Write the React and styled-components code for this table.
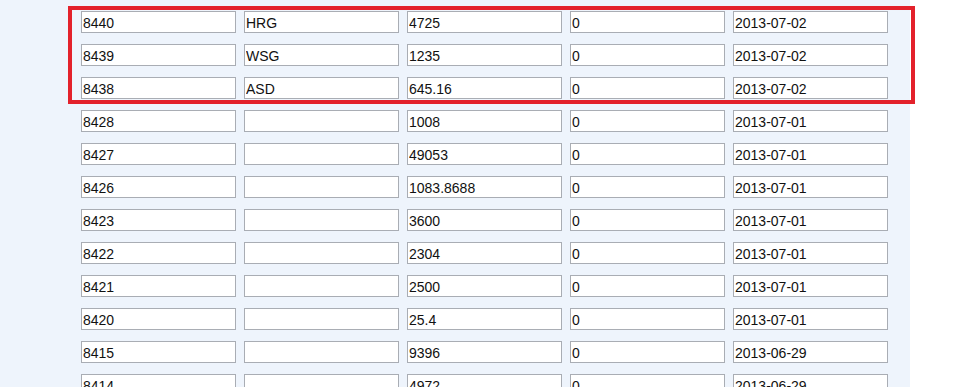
import React from "react";
import styled, { createGlobalStyle } from "styled-components";

const Global = createGlobalStyle`
  html, body { margin: 0; padding: 0; background: #ffffff; }
  body { font-family: "Liberation Sans", Arial, sans-serif; overflow: hidden; }
`;

const Page = styled.div`
  width: 910px;
  min-height: 387px;
  background: #eef4fc;
  position: relative;
  padding: 11px 0 0 81px;
  box-sizing: border-box;
`;

const List = styled.div`
  display: flex;
  flex-direction: column;
  gap: 11px;
`;

const Row = styled.div`
  display: flex;
  gap: 8px;
`;

const Field = styled.input`
  width: 155px;
  height: 22px;
  box-sizing: border-box;
  border: 1px solid #a9adb4;
  background: #ffffff;
  margin: 0;
  padding: 1px 2px 0 1px;
  font-family: "Liberation Sans", Arial, sans-serif;
  font-size: 14px;
  color: #111111;
  outline: none;
`;

const Highlight = styled.div`
  position: absolute;
  left: 68px;
  top: 6px;
  width: 847px;
  height: 98px;
  box-sizing: border-box;
  border: 4px solid #e3212b;
  pointer-events: none;
`;

const rows = [
  ["8440", "HRG", "4725", "0", "2013-07-02"],
  ["8439", "WSG", "1235", "0", "2013-07-02"],
  ["8438", "ASD", "645.16", "0", "2013-07-02"],
  ["8428", "", "1008", "0", "2013-07-01"],
  ["8427", "", "49053", "0", "2013-07-01"],
  ["8426", "", "1083.8688", "0", "2013-07-01"],
  ["8423", "", "3600", "0", "2013-07-01"],
  ["8422", "", "2304", "0", "2013-07-01"],
  ["8421", "", "2500", "0", "2013-07-01"],
  ["8420", "", "25.4", "0", "2013-07-01"],
  ["8415", "", "9396", "0", "2013-06-29"],
  ["8414", "", "4972", "0", "2013-06-29"],
];

export default function App() {
  return (
    <>
      <Global />
      <Page>
        <List>
          {rows.map((r, i) => (
            <Row key={i}>
              {r.map((v, j) => (
                <Field key={j} type="text" defaultValue={v} readOnly />
              ))}
            </Row>
          ))}
        </List>
        <Highlight />
      </Page>
    </>
  );
}
